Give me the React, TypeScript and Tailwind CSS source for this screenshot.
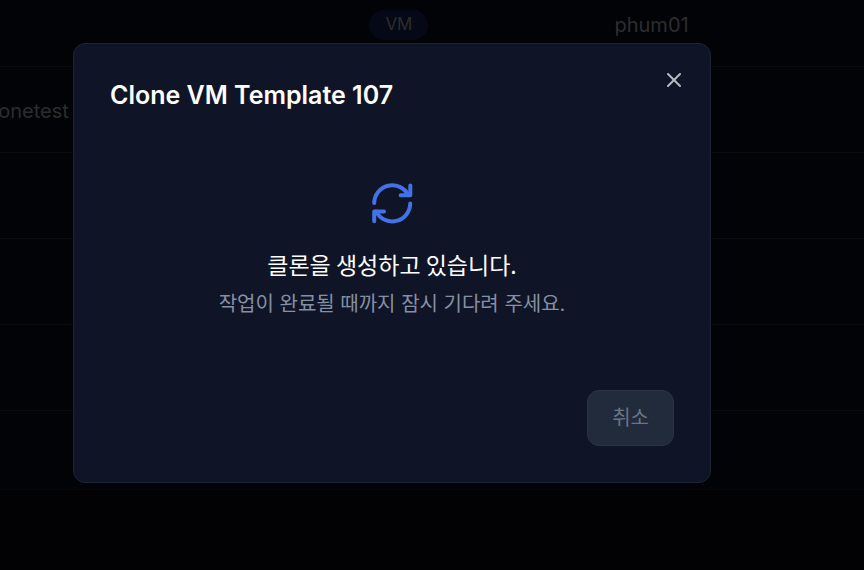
import { X } from "lucide-react";

const rows = [
  { name: "", type: "VM", owner: "phum01" },
  { name: "clonetest", type: "", owner: "" },
  { name: "", type: "", owner: "" },
  { name: "", type: "", owner: "" },
  { name: "", type: "", owner: "" },
];

const SyncIcon = () => (
  <svg
    className="size-12"
    viewBox="0 0 48 48"
    fill="none"
    stroke="currentColor"
    strokeWidth="4"
    strokeLinecap="round"
    strokeLinejoin="round"
    aria-hidden="true"
  >
    <path d="M6.2 23A18 18 0 0 1 40.2 15" />
    <path d="M42.3 5.4V15.2H32.6" />
    <path d="M42.2 23.6A18 18 0 0 1 8.2 31.6" />
    <path d="M6.2 41.2V31.4H16" />
  </svg>
);

const TemplateTable = () => (
  <div className="-mt-5 overflow-hidden border-b border-[#05060a] bg-[#020307] pb-[78px]">
    <table className="w-full table-fixed text-[#2d2d2e]">
      <tbody>
        {rows.map((row, i) => (
          <tr key={i} className="h-[86px] border-b border-[#0a0b0f]">
            <td className="w-[35%] pt-1">
              <span className="-ml-[18px] text-xl">{row.name}</span>
            </td>
            <td className="w-[22%] pt-1 pl-[67px]">
              {row.type && (
                <span className="inline-flex h-[30px] items-center rounded-full bg-[#050816] px-4 text-[17px]">
                  {row.type}
                </span>
              )}
            </td>
            <td className="pt-1 pl-[122px] text-xl">{row.owner}</td>
          </tr>
        ))}
      </tbody>
    </table>
  </div>
);

const CloneDialog = () => (
  <div className="fixed inset-0 flex items-start justify-center pt-[43px] pr-20">
    <div
      role="dialog"
      aria-modal="true"
      aria-labelledby="clone-title"
      className="relative w-full max-w-[638px] rounded-xl border border-[#1c2333] bg-[#101427] p-9"
    >
      <h2 id="clone-title" className="text-[25px] leading-[30px] font-semibold text-white">
        Clone VM Template 107
      </h2>

      {/* 닫기 버튼 */}
      <button type="button" aria-label="닫기" className="absolute top-6 right-6 text-[#b9bbc1]">
        <X className="size-6" strokeWidth={2} />
      </button>

      {/* 진행 상태 */}
      <div className="flex flex-col items-center py-[70px] text-center">
        <div className="text-[#4272e6]">
          <SyncIcon />
        </div>
        <p className="mt-5 font-['Noto_Sans_CJK_KR',sans-serif] text-[23px] leading-8 text-white">
          클론을 생성하고 있습니다.
        </p>
        <p className="mt-2 text-xl leading-8 text-[#8590a3]">작업이 완료될 때까지 잠시 기다려 주세요.</p>
      </div>

      <div className="flex justify-end">
        <button
          type="button"
          disabled
          className="h-14 rounded-xl border border-[#2a3445] bg-[#222b3c] px-6 text-xl text-[#6b7484]"
        >
          취소
        </button>
      </div>
    </div>
  </div>
);

export default function App() {
  return (
    <div className="min-h-screen overflow-hidden bg-[#020204] font-['Inter','Noto_Sans_CJK_KR',sans-serif]">
      <TemplateTable />
      <CloneDialog />
    </div>
  );
}
